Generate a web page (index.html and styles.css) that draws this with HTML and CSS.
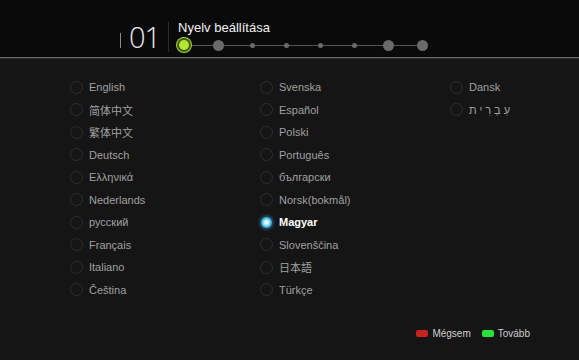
FILE: index.html
```html
<!DOCTYPE html>
<html lang="hu">
<head>
    <meta charset="UTF-8">
    <meta name="viewport" content="width=device-width, initial-scale=1.0">
    <title>Nyelv beállítása</title>
    <link rel="stylesheet" href="styles.css">
</head>
<body>
    <div class="header">
        <div class="tick"></div>
        <div class="step-num">01</div>
        <div class="divider"></div>
        <div class="title-block">
            <div class="title">Nyelv beállítása</div>
            <div class="progress">
                <span class="node current"></span>
                <span class="node big"></span>
                <span class="node"></span>
                <span class="node"></span>
                <span class="node"></span>
                <span class="node"></span>
                <span class="node big"></span>
                <span class="node big"></span>
            </div>
        </div>
    </div>

    <div class="languages">
        <div class="col">
            <div class="lang"><span class="radio"></span>English</div>
            <div class="lang"><span class="radio"></span>简体中文</div>
            <div class="lang"><span class="radio"></span>繁体中文</div>
            <div class="lang"><span class="radio"></span>Deutsch</div>
            <div class="lang"><span class="radio"></span>Ελληνικά</div>
            <div class="lang"><span class="radio"></span>Nederlands</div>
            <div class="lang"><span class="radio"></span>русский</div>
            <div class="lang"><span class="radio"></span>Français</div>
            <div class="lang"><span class="radio"></span>Italiano</div>
            <div class="lang"><span class="radio"></span>Čeština</div>
        </div>
        <div class="col">
            <div class="lang"><span class="radio"></span>Svenska</div>
            <div class="lang"><span class="radio"></span>Español</div>
            <div class="lang"><span class="radio"></span>Polski</div>
            <div class="lang"><span class="radio"></span>Português</div>
            <div class="lang"><span class="radio"></span>български</div>
            <div class="lang"><span class="radio"></span>Norsk(bokmål)</div>
            <div class="lang selected"><span class="radio"></span>Magyar</div>
            <div class="lang"><span class="radio"></span>Slovenščina</div>
            <div class="lang"><span class="radio"></span>日本語</div>
            <div class="lang"><span class="radio"></span>Türkçe</div>
        </div>
        <div class="col">
            <div class="lang"><span class="radio"></span>Dansk</div>
            <div class="lang"><span class="radio"></span><span class="hebrew">&#1506;&#1460;&#1489;&#1456;&#1512;&#1460;&#1497;&#1514;</span></div>
        </div>
    </div>

    <div class="footer">
        <span class="key red"></span><span class="key-label">Mégsem</span>
        <span class="key green"></span><span class="key-label">Tovább</span>
    </div>
</body>
</html>
```

FILE: styles.css
```css
body {
    margin: 0;
    width: 579px;
    height: 360px;
    overflow: hidden;
    background-color: #151515;
    font-family: "Liberation Sans", Arial, "Noto Sans CJK SC", sans-serif;
    color: #a0a0a0;
}
.header {
    height: 57px;
    background-color: #0a0a0a;
    border-bottom: 1px solid #6a6a6a;
    box-shadow: 0 1px 0 #2a2a2a;
    display: flex;
    align-items: flex-start;
    padding-left: 120px;
}
.tick {
    width: 1px;
    height: 15px;
    background-color: #8a8a8a;
    margin-top: 33px;
}
.step-num {
    font-family: "Open Sans", sans-serif;
    font-weight: 300;
    font-size: 29px;
    line-height: 1;
    color: #e8e8e8;
    margin-top: 22px;
    margin-left: 8px;
    letter-spacing: -1px;
}
.divider {
    width: 1px;
    height: 30px;
    background-color: #2c2c2c;
    margin-top: 22px;
    margin-left: 8px;
}
.title-block {
    margin-left: 9px;
    margin-top: 20px;
}
.title {
    font-size: 13px;
    color: #f2f2f2;
    line-height: 16px;
}
.progress {
    position: relative;
    display: flex;
    align-items: center;
    gap: 20px;
    height: 16px;
    margin-top: 1px;
    margin-left: -1px;
}
.progress::before {
    content: "";
    position: absolute;
    left: 7px;
    right: 7px;
    top: 8px;
    height: 1px;
    background-color: #555;
}
.node {
    position: relative;
    width: 14px;
    height: 14px;
    display: flex;
    align-items: center;
    justify-content: center;
}
.node::after {
    content: "";
    width: 5px;
    height: 5px;
    border-radius: 50%;
    background-color: #6a6a6a;
}
.node.big::after {
    width: 11px;
    height: 11px;
}
.node.current::after {
    width: 10px;
    height: 10px;
    background-color: #b2e630;
    border: 2px solid #3e5a0c;
    box-shadow: 0 0 0 1px #a4d43a;
}
.languages {
    display: grid;
    grid-template-columns: 190px 190px 120px;
    padding-left: 70px;
    padding-top: 18px;
}
.lang {
    display: flex;
    align-items: center;
    height: 22.5px;
    font-size: 11px;
}
.radio {
    width: 11px;
    height: 11px;
    border: 1px solid #2e2e2e;
    border-radius: 50%;
    margin-right: 6px;
    flex-shrink: 0;
}
.hebrew {
    letter-spacing: 3px;
}
.selected {
    color: #ffffff;
    font-weight: bold;
}
.selected .radio {
    border-color: #1c4a60;
    background: radial-gradient(circle at 50% 50%, #ffffff 0, #c8f0ff 2px, #5ec2ea 4px, #2a88b4 6px);
    box-shadow: 0 0 3px #2a8cc0;
}
.footer {
    display: flex;
    align-items: center;
    justify-content: flex-end;
    padding-right: 49px;
    margin-top: 27px;
    font-size: 10px;
    color: #cfcfcf;
}
.key {
    width: 12px;
    height: 7px;
    border-radius: 2px;
    margin-right: 4px;
}
.key.red {
    background-color: #c8231c;
}
.key.green {
    background-color: #28e03a;
    margin-left: 11px;
}
```
